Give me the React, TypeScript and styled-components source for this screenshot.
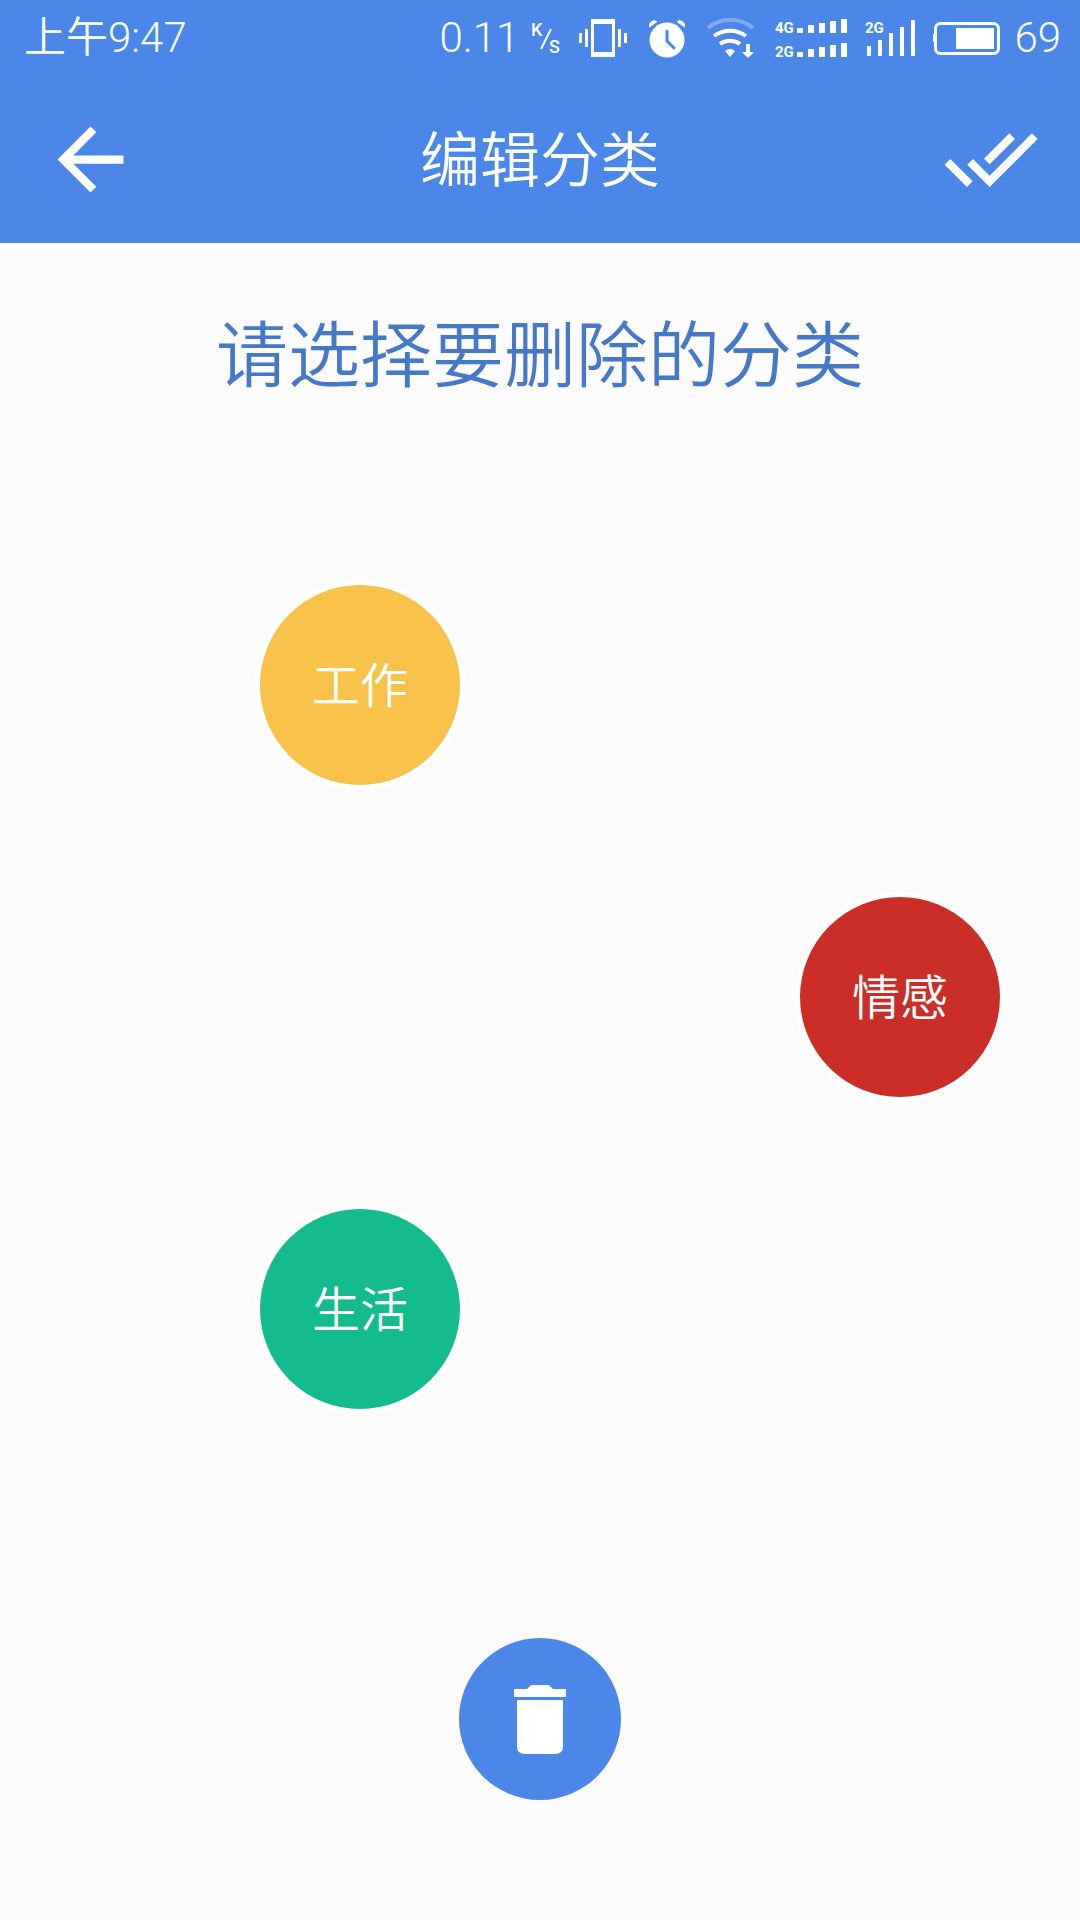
import React from 'react';
import styled, { createGlobalStyle } from 'styled-components';

const BLUE = '#4a87e8';

const GlobalStyle = createGlobalStyle`
  * { box-sizing: border-box; }
  body {
    margin: 0;
    background: #fbfbfb;
    font-family: Roboto, "Noto Sans CJK SC", sans-serif;
    font-weight: 350;
  }
`;

const Page = styled.div`
  min-height: 100vh;
  display: flex;
  flex-direction: column;
`;

const Header = styled.header`
  background: ${BLUE};
  color: #fff;
`;

const StatusBar = styled.div`
  height: 75px;
  padding: 0 19px 0 24px;
  display: flex;
  align-items: center;
  justify-content: space-between;
  font-size: 42px;
  line-height: 48px;
`;

const StatusIcons = styled.div`
  display: flex;
  align-items: center;
  gap: 14px;

  svg { display: block; overflow: visible; }
`;

const Speed = styled.span`
  display: flex;
  align-items: center;
  gap: 12px;
`;

const AppBar = styled.div`
  height: 168px;
  padding: 0 41px;
  display: grid;
  grid-template-columns: 1fr auto 1fr;
  align-items: center;
`;

const Title = styled.h1`
  margin: 0;
  padding-top: 6px;
  font-size: 60px;
  line-height: 72px;
  font-weight: 350;
`;

const IconButton = styled.button<{ $end?: boolean }>`
  justify-self: ${p => (p.$end ? 'end' : 'start')};
  padding: 0;
  border: 0;
  background: none;
  color: inherit;
  cursor: pointer;

  svg { display: block; }
`;

const Main = styled.main`
  flex: 1;
  display: flex;
  flex-direction: column;
  align-items: center;
  padding: 69px 0 120px;
`;

const Prompt = styled.h2`
  margin: 0;
  color: #4478c8;
  font-size: 72px;
  line-height: 90px;
  font-weight: 350;
`;

const Board = styled.div`
  width: 100%;
  margin: 178px 0 auto;
  display: grid;
  grid-template-columns: repeat(6, 1fr);
  row-gap: 102px;
  justify-items: center;
`;

const Chip = styled.button<{ $color: string; $column: number; $row: number }>`
  grid-column: ${p => p.$column} / span 2;
  grid-row: ${p => p.$row};
  width: 210px;
  height: 210px;
  padding: 4px 0 0;
  border: 5px solid #fff;
  border-radius: 50%;
  background: ${p => p.$color};
  color: #fff;
  font: inherit;
  font-size: 48px;
  line-height: 60px;
  cursor: pointer;
`;

const DeleteButton = styled.button`
  width: 162px;
  height: 162px;
  padding: 0;
  border: 0;
  border-radius: 50%;
  background: ${BLUE};
  color: #fff;
  display: grid;
  place-items: center;
  cursor: pointer;
`;

const SignalLabel = styled.text`
  font-family: Roboto, sans-serif;
  font-size: 15px;
  font-weight: 700;
  fill: #fff;
`;

const UnitLabel = styled.text`
  font-size: 18px;
  font-weight: 500;
  fill: #fff;
`;

const categories = [
  { name: '工作', color: '#f7c14a', column: 2 },
  { name: '情感', color: '#cb2d27', column: 5 },
  { name: '生活', color: '#13bb8f', column: 2 },
];

const PerSecond = () => (
  <svg width="30" height="40" viewBox="0 0 30 40" fill="none">
    <UnitLabel x="0" y="18">K</UnitLabel>
    <path d="M20 11 L10 31" stroke="#fff" strokeWidth="2" />
    <UnitLabel x="18" y="35">S</UnitLabel>
  </svg>
);

const Vibrate = () => (
  <svg width="59" height="40" viewBox="0 0 59 40" fill="#fff">
    <path fillRule="evenodd" d="M16 1h24v38H16zM19 6v28h18V6z" />
    <rect x="4" y="15" width="3" height="10" />
    <rect x="10" y="11" width="3" height="18" />
    <rect x="43" y="11" width="3" height="18" />
    <rect x="49" y="15" width="3" height="10" />
  </svg>
);

const Alarm = () => (
  <svg width="44" height="40" viewBox="0 0 44 40" fill="none">
    <circle cx="19" cy="22" r="17.5" fill="#fff" />
    <path d="M1.500 9 A5 5 0 0 1 9 3.500z M36.500 9 A5 5 0 0 0 29 3.500z" fill="#fff" stroke="#fff" />
    <path d="M19 13v10l7 7" stroke={BLUE} strokeWidth="3" strokeLinecap="round" />
  </svg>
);

const Wifi = () => (
  <svg width="55" height="40" viewBox="0 0 55 40" fill="none" stroke="#fff" strokeWidth="4">
    <path d="M2 10 A35 35 0 0 1 47 10" opacity=".3" />
    <path d="M8 18 A27 27 0 0 1 40 18" />
    <path d="M14 26 A17 17 0 0 1 34 26" />
    <path d="M24 39 L19 33 Q24 29 29 33Z" fill="#fff" stroke="none" />
    <path d="M40 26h4v8h4l-6 6-6-6h4z" fill="#fff" stroke="none" />
  </svg>
);

const DualSignal = () => (
  <svg width="76" height="40" viewBox="0 0 76 40" fill="#fff">
    {['4G', '2G'].map((label, row) => (
      <g key={label} transform={`translate(0 ${row * 24})`}>
        <SignalLabel x="0" y="15">{label}</SignalLabel>
        {[5, 8, 10, 12, 14].map((h, i) => (
          <rect key={h} x={22 + i * 11} y={15 - h} width="6" height={h} />
        ))}
      </g>
    ))}
  </svg>
);

const Signal = () => (
  <svg width="53" height="40" viewBox="0 0 53 40" fill="#fff">
    <SignalLabel x="0" y="15">2G</SignalLabel>
    {[10, 16, 23, 29, 36].map((h, i) => (
      <rect key={h} x={2 + i * 11} y={38 - h} width="4" height={h} />
    ))}
  </svg>
);

const Battery = () => (
  <svg width="68" height="40" viewBox="0 0 68 40">
    <rect x="3.500" y="5.500" width="63" height="30" rx="5" fill="none" stroke="#fff" strokeWidth="3" />
    <path d="M3 16H1v8h2z" fill="#fff" />
    <rect x="24" y="10" width="38" height="21" fill="#fff" />
  </svg>
);

export default function App() {
  return (
    <Page>
      <GlobalStyle />
      <Header>
        <StatusBar>
          <span>上午9:47</span>
          <StatusIcons>
            <Speed>0.11<PerSecond /></Speed>
            <Vibrate />
            <Alarm />
            <Wifi />
            <DualSignal />
            <Signal />
            <Battery />
            <span>69</span>
          </StatusIcons>
        </StatusBar>
        <AppBar>
          <IconButton aria-label="返回">
            <svg width="99" height="99" viewBox="0 0 24 24" fill="currentColor">
              <path d="M20 11H7.830l5.590-5.590L12 4l-8 8 8 8 1.410-1.410L7.830 13H20v-2z" />
            </svg>
          </IconButton>
          <Title>编辑分类</Title>
          <IconButton aria-label="完成" $end>
            <svg width="96" height="96" viewBox="0 0 24 24" fill="currentColor">
              <path d="M18 7l-1.410-1.410-6.340 6.340 1.410 1.410L18 7zm4.240-1.410L11.660 16.170 7.480 12l-1.410 1.410L11.660 19l12-12-1.420-1.410zM.410 13.410L6 19l1.410-1.410L1.830 12 .410 13.410z" />
            </svg>
          </IconButton>
        </AppBar>
      </Header>
      <Main>
        <Prompt>请选择要删除的分类</Prompt>
        <Board>
          {categories.map((c, i) => (
            <Chip key={c.name} $color={c.color} $column={c.column} $row={i + 1}>{c.name}</Chip>
          ))}
        </Board>
        <DeleteButton aria-label="删除">
          <svg width="52" height="70" viewBox="0 0 52 70" fill="currentColor">
            <path d="M0 5H13L16 2Q17 1 19 1H33Q35 1 36 2L39 5H52V13H0z" />
            <path d="M3 16H49V62Q49 70 41 70H11Q3 70 3 62z" />
          </svg>
        </DeleteButton>
      </Main>
    </Page>
  );
}
